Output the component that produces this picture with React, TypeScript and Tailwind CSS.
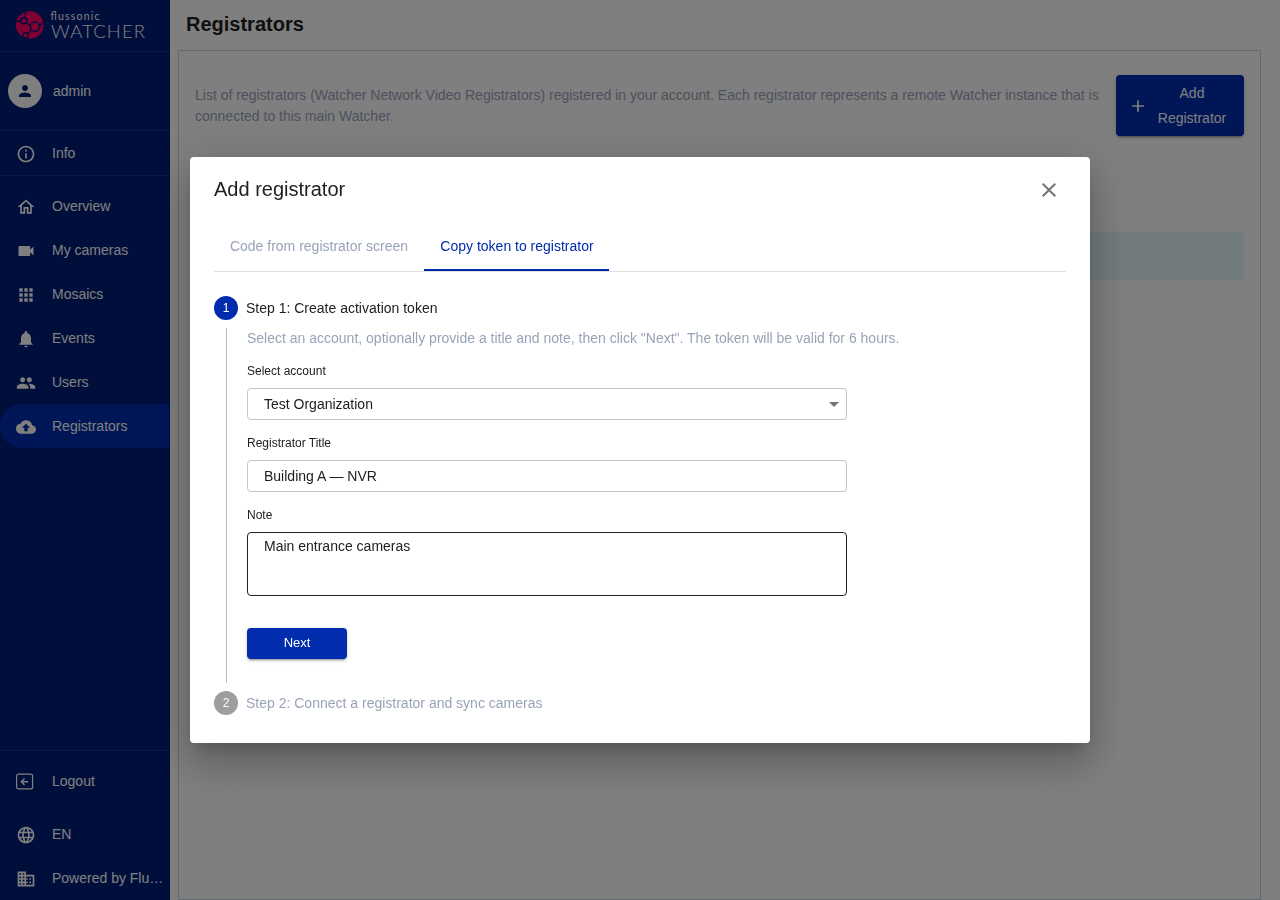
import type { ComponentType } from "react";
import {
  MdAdd,
  MdApps,
  MdArrowDropDown,
  MdBusiness,
  MdClose,
  MdCloudUpload,
  MdInfoOutline,
  MdLanguage,
  MdNotifications,
  MdOutlineHome,
  MdPeople,
  MdPerson,
  MdVideocam,
} from "react-icons/md";

type IconType = ComponentType<{ className?: string }>;

type NavItem = {
  label: string;
  icon: IconType;
  active?: boolean;
};

const navItems: NavItem[] = [
  { label: "Overview", icon: MdOutlineHome },
  { label: "My cameras", icon: MdVideocam },
  { label: "Mosaics", icon: MdApps },
  { label: "Events", icon: MdNotifications },
  { label: "Users", icon: MdPeople },
  { label: "Registrators", icon: MdCloudUpload, active: true },
];

function Logo() {
  return (
    <svg width="136" height="34" viewBox="0 0 136 34" className="ml-3">
      <circle cx="17.7" cy="17" r="13.8" fill="#ff0066" />
      <g fill="#ff0066" stroke="#001c78" strokeWidth="1.4">
        <path
          d="M4.500 13.500L9 13M12.300 10L13.800 4M14.500 15L18.500 17.500M27 17L31.500 15.500M19.500 22L15.500 25.500"
          fill="none"
        />
        <circle cx="11.8" cy="12.700" r="3" />
        <circle cx="23" cy="18.700" r="4.700" />
        <circle cx="13.8" cy="27.300" r="2.700" />
      </g>
      <text x="38.500" y="11.500" textLength="49" fontSize="10.500" fill="#fff" fontFamily="Lato, sans-serif">
        flussonic
      </text>
      <text x="39" y="29.700" textLength="94" fontSize="18.500" fontWeight="300" fill="#fff" fontFamily="Lato, sans-serif">
        WATCHER
      </text>
    </svg>
  );
}

function LogoutIcon({ className }: { className?: string }) {
  return (
    <svg width="18" height="17" viewBox="0 0 18 17" fill="none" stroke="currentColor" className={className}>
      <rect x="0.600" y="1.200" width="16" height="14.700" rx="2" strokeWidth="1.200" />
      <path d="M12 8.700H5.500M8.500 5.500L5.300 8.700L8.500 11.900" strokeWidth="1.400" />
    </svg>
  );
}

function NavRow({ label, icon: Icon, active }: NavItem) {
  return (
    <a
      className={`flex h-11 items-center pl-4 text-white ${
        active ? "rounded-l-full bg-[#002cad]" : ""
      }`}
    >
      <Icon className="mt-0.5 size-5 shrink-0" />
      <span className="ml-4 whitespace-nowrap">{label}</span>
    </a>
  );
}

function Sidebar() {
  return (
    <aside className="flex w-[170px] shrink-0 flex-col bg-[#001c78] pr-px text-sm text-white">
      <div className="flex h-[52px] items-center border-b border-[#183080] pb-px">
        <Logo />
      </div>
      <div className="flex h-[79px] items-center border-b border-[#183080] pl-2">
        <span className="flex size-[34px] items-center justify-center rounded-full bg-white text-[#001c78]">
          <MdPerson className="size-[18px]" />
        </span>
        <span className="ml-[11px]">admin</span>
      </div>
      <div className="border-b border-[#183080]">
        <NavRow label="Info" icon={MdInfoOutline} />
      </div>
      <nav className="mt-2">
        {navItems.map((item) => (
          <NavRow key={item.label} {...item} />
        ))}
      </nav>
      <div className="mt-auto border-t border-[#183080]">
        <a className="flex h-[61px] items-center pl-4">
          <LogoutIcon />
          <span className="ml-[18px] pb-0.5">Logout</span>
        </a>
        <NavRow label="EN" icon={MdLanguage} />
        <NavRow label="Powered by Flu…" icon={MdBusiness} />
      </div>
    </aside>
  );
}

function RegistratorsPage() {
  return (
    <main className="flex flex-1 flex-col pl-2 pr-[19px]">
      <h1 className="flex h-[50px] items-center pl-2 pb-0.5 text-xl font-bold text-[#212121]">Registrators</h1>
      <section className="flex-1 border border-[#c8d0d8] px-4 pt-6">
        <div className="flex items-center">
          <p className="flex-1 text-sm leading-[21px] text-[#99a3b8]">
            List of registrators (Watcher Network Video Registrators) registered in your account. Each registrator
            represents a remote Watcher instance that is connected to this main Watcher.
          </p>
          <button className="ml-4 flex h-[61px] w-32 items-center rounded bg-[#002cad] pl-3 text-sm leading-[25px] text-white shadow-[0_3px_1px_-2px_rgba(0,0,0,.2),0_2px_2px_rgba(0,0,0,.14),0_1px_5px_rgba(0,0,0,.12)]">
            <MdAdd className="size-5" />
            <span className="ml-2 w-[72px] text-center">Add Registrator</span>
          </button>
        </div>
        <div className="mt-24 h-12 rounded bg-[#e5f6fd]" />
      </section>
    </main>
  );
}

function StepBadge({ value, active }: { value: number; active?: boolean }) {
  return (
    <span
      className={`flex size-6 items-center justify-center rounded-full text-xs text-white ${
        active ? "bg-[#002cad]" : "bg-[#9e9e9e]"
      }`}
    >
      {value}
    </span>
  );
}

function AddRegistratorDialog() {
  return (
    <div
      role="dialog"
      className="h-[586px] w-[900px] rounded bg-white px-6 text-sm text-[#212121] shadow-[0_11px_15px_-7px_rgba(0,0,0,.2),0_24px_38px_3px_rgba(0,0,0,.14),0_9px_46px_8px_rgba(0,0,0,.12)]"
    >
      <header className="flex h-[65px] items-center justify-between pr-[5px]">
        <h2 className="pb-0.5 text-xl">Add registrator</h2>
        <MdClose className="size-6 text-[#757575]" />
      </header>

      <div className="flex h-[50px] border-b border-[#e0e0e0]">
        <button className="h-[49px] w-[210px] pb-0.5 text-[#99a3b8]">Code from registrator screen</button>
        <button className="h-[49px] w-[185px] border-b-2 border-[#002cad] pl-px text-[#002cad]">
          Copy token to registrator
        </button>
      </div>

      <div className="mt-6 flex items-center gap-2">
        <StepBadge value={1} active />
        <span>Step 1: Create activation token</span>
      </div>
      <div className="mt-2 ml-3 flex h-[355px] flex-col items-start border-l border-[#bdbdbd] pl-5">
        <p className="leading-5 text-[#99a3b8]">
          Select an account, optionally provide a title and note, then click "Next". The token will be valid for 6
          hours.
        </p>
        <label className="mt-[15px] text-xs">Select account</label>
        <div className="mt-[9px] flex h-8 w-[600px] items-center justify-between rounded border border-[#c4c4c4] pl-4">
          Test Organization
          <MdArrowDropDown className="size-6 text-[#757575]" />
        </div>
        <label className="mt-[15px] text-xs">Registrator Title</label>
        <input
          defaultValue="Building A — NVR"
          className="mt-[9px] h-8 w-[600px] rounded border border-[#c4c4c4] px-4"
        />
        <label className="mt-[15px] text-xs">Note</label>
        <textarea
          defaultValue="Main entrance cameras"
          className="mt-[9px] h-16 w-[600px] resize-none rounded border border-[#212121] px-4 pt-[3px]"
        />
        <button className="mt-8 h-[31px] w-[100px] rounded bg-[#002cad] text-[13px] text-white shadow-[0_3px_1px_-2px_rgba(0,0,0,.2),0_2px_2px_rgba(0,0,0,.14),0_1px_5px_rgba(0,0,0,.12)]">
          Next
        </button>
      </div>
      <div className="mt-2 flex items-center gap-2 text-[#99a3b8]">
        <StepBadge value={2} />
        <span>Step 2: Connect a registrator and sync cameras</span>
      </div>
    </div>
  );
}

export default function App() {
  return (
    <div className="flex h-screen overflow-hidden bg-white font-['Liberation_Sans',Arial,sans-serif]">
      <Sidebar />
      <RegistratorsPage />
      <div className="fixed inset-0 flex items-center justify-center bg-black/50">
        <AddRegistratorDialog />
      </div>
    </div>
  );
}
